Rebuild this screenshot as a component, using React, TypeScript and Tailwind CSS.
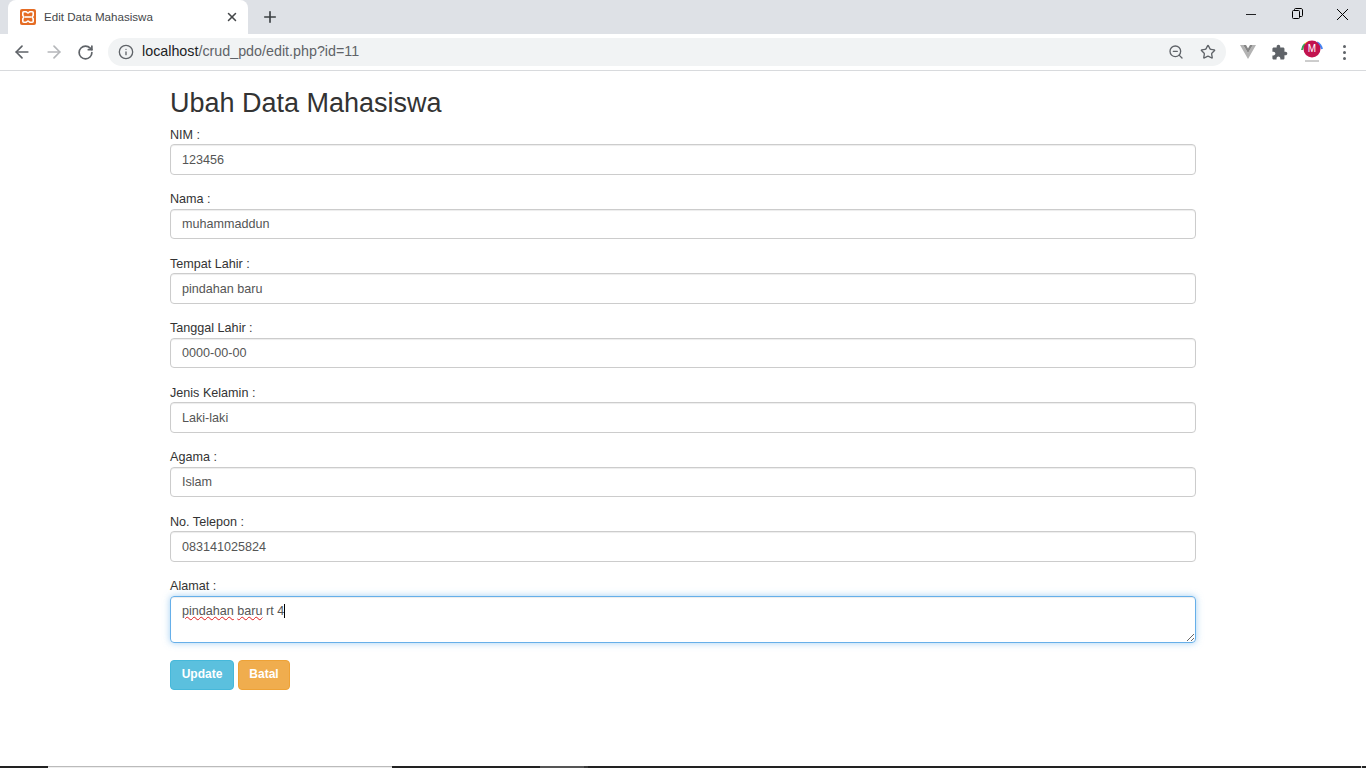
import React from 'react';
import { ArrowLeft, ArrowRight, RotateCw, Info, ZoomOut, Star, Plus, X } from 'lucide-react';

const fields = [
  { label: 'NIM :', value: '123456' },
  { label: 'Nama :', value: 'muhammaddun' },
  { label: 'Tempat Lahir :', value: 'pindahan baru' },
  { label: 'Tanggal Lahir :', value: '0000-00-00' },
  { label: 'Jenis Kelamin :', value: 'Laki-laki' },
  { label: 'Agama :', value: 'Islam' },
  { label: 'No. Telepon :', value: '083141025824' },
];

const Xampp = () => (
  <svg width="16" height="16" viewBox="0 0 16 16">
    <rect width="16" height="16" rx="2" fill="#e56c24" />
    <path d="M3.800 2.800h2.200c1 0 1.200 1.200 2 1.200s1-1.200 2-1.200h2.200c.6 0 1 .4 1 1v2.400c0 1-1.200 1-1.200 1.800s1.200.8 1.200 1.800v2.400c0 .6-.4 1-1 1H10c-1 0-1.200-1.200-2-1.200s-1 1.200-2 1.200H3.800c-.6 0-1-.4-1-1V9.800c0-1 1.200-1 1.200-1.800s-1.200-.8-1.200-1.800V3.800c0-.6.4-1 1-1z" fill="none" stroke="#fff" strokeWidth="1.600" />
    <path d="M5 8h6" stroke="#fff" strokeWidth="1.600" />
  </svg>
);

const Chrome = () => (
  <div className="flex flex-col h-[71px] border-b border-[#d8dadd] bg-white">
    <div className="h-[34px] bg-[#dee1e6] flex items-end relative">
      <div className="ml-2 w-[240px] h-[34px] mt-auto bg-white rounded-t-lg flex items-center pl-3 pr-2 relative">
        <Xampp />
        <span className="ml-2 text-[11.600px] text-[#45474a] flex-1">Edit Data Mahasiswa</span>
        <X size={14} strokeWidth={2.600} className="mr-[1px] text-[#45474a]" />
      </div>
      <Plus size={18} strokeWidth={2.200} className="ml-[13px] mb-[8px] text-[#3c4043]" />
      <div className="ml-auto flex items-center h-[28px] mb-[6px] pr-[2px] text-[#202124]">
        <div className="w-[46px] flex justify-center">
          <svg width="10" height="10" viewBox="0 0 10 10" stroke="currentColor" strokeWidth="1"><path d="M0 5.500h10" /></svg>
        </div>
        <div className="w-[46px] flex justify-center">
          <svg width="12" height="12" viewBox="0 0 12 12" fill="none" stroke="#000" strokeWidth="1"><rect x="1.500" y="2.500" width="7" height="8" rx="1" /><path d="M3.500 2.500V1.500c0-.5.3-1 1-1h5.500c.8 0 1.500.6 1.500 1.500v5.500c0 .7-.5 1-1 1H8.500" /></svg>
        </div>
        <div className="w-[44px] flex justify-center">
          <svg width="11" height="11" viewBox="0 0 11 11" stroke="#000" strokeWidth="1"><path d="M0 0l11 11M11 0L0 11" /></svg>
        </div>
      </div>
    </div>
    <div className="h-[36px] flex items-center">
      <ArrowLeft size={20} strokeWidth={2} className="ml-[12px] text-[#5f6368]" />
      <ArrowRight size={20} strokeWidth={2} className="ml-[12px] text-[#b5b7ba]" />
      <RotateCw size={17} strokeWidth={2.400} className="ml-[13px] text-[#5f6368]" />
      <div className="ml-[14px] w-[1118px] h-[28px] rounded-full bg-[#f1f3f4] flex items-center pl-[10px] pr-[10px]">
        <Info size={16} strokeWidth={2} className="text-[#5f6368]" />
        <span className="ml-[8px] text-[14.300px] text-[#5f6368] flex-1"><span className="text-[#202124]">localhost</span>/crud_pdo/edit.php?id=11</span>
        <ZoomOut size={16} strokeWidth={2} className="text-[#5f6368]" />
        <Star size={16} strokeWidth={2} className="ml-[16px] text-[#5f6368]" />
      </div>
      <svg width="16" height="16" viewBox="0 0 16 16" className="ml-[14px]">
        <path d="M0 1l8 14 8-14h-3.200L8 9 3.200 1z" fill="#b3b3b3" />
        <path d="M3.200 1L8 9l4.800-8H10L8 4.500 6 1z" fill="#868686" />
      </svg>
      <svg width="17" height="17" viewBox="0 0 24 24" fill="#5f6368" className="ml-[15px]">
        <path d="M20.500 11H19V7c0-1.100-.9-2-2-2h-4V3.500C13 2.120 11.880 1 10.500 1S8 2.120 8 3.500V5H4c-1.100 0-1.990.9-1.990 2v3.800H3.500c1.490 0 2.700 1.210 2.700 2.700s-1.210 2.700-2.700 2.700H2V20c0 1.100.9 2 2 2h3.800v-1.500c0-1.490 1.210-2.700 2.700-2.700 1.490 0 2.700 1.210 2.700 2.700V22H17c1.100 0 2-.9 2-2v-4h1.500c1.380 0 2.500-1.120 2.500-2.500S21.880 11 20.500 11z" />
      </svg>
      <div className="ml-[12px] w-[24px] h-[26px] relative">
        <svg width="24" height="26" viewBox="0 0 24 26" className="absolute inset-0" fill="none">
          <path d="M2 11a10 10 0 0 1 3-6" stroke="#34a853" strokeWidth="2" />
          <path d="M5 5a10 10 0 0 1 5-2.500" stroke="#fbbc05" strokeWidth="1.500" />
          <path d="M17 3.500a10 10 0 0 1 5 6.500" stroke="#4285f4" strokeWidth="2" />
          <circle cx="12" cy="10" r="8.500" fill="#c2134f" />
          <path d="M5 22h14" stroke="#9a9a9a" strokeWidth="1" />
        </svg>
        <span className="absolute left-0 right-0 top-[5px] text-center text-white text-[10px] leading-[10px]">M</span>
      </div>
      <div className="ml-[19px] flex flex-col gap-[3px]">
        <span className="w-[3px] h-[3px] rounded-full bg-[#5f6368]" />
        <span className="w-[3px] h-[3px] rounded-full bg-[#5f6368]" />
        <span className="w-[3px] h-[3px] rounded-full bg-[#5f6368]" />
      </div>
    </div>
  </div>
);

export default function App() {
  return (
    <div className="h-[768px] overflow-hidden bg-white flex flex-col font-['Liberation_Sans',Arial,sans-serif]">
      <Chrome />
      <div className="flex-1 w-[1026px] mx-auto text-[12.600px] text-[#333]">
        <h2 className="text-[27px] leading-[30px] mt-[17px] mb-[6px]">Ubah Data Mahasiswa</h2>
        {fields.map((f) => (
          <div key={f.label} className="mb-[13.500px]">
            <label className="block h-[20.400px] leading-[23.500px]">{f.label}</label>
            <input
              readOnly
              defaultValue={f.value}
              className="block w-full h-[30.600px] px-[11px] pb-[0.200px] border border-[#ccc] rounded-[4px] text-[#555] outline-none shadow-[inset_0_1px_1px_rgba(0,0,0,0.075)]"
            />
          </div>
        ))}
        <div className="mb-[13.500px]">
          <label className="block h-[20.400px] leading-[23.500px]">Alamat :</label>
          <div className="w-full h-[47px] px-[11px] pt-[5px] border border-[#66afe9] rounded-[4px] text-[#555] overflow-auto resize-y shadow-[inset_0_1px_1px_rgba(0,0,0,0.075),0_0_7px_rgba(102,175,233,0.6)]">
            <span className="underline decoration-wavy decoration-[#e01b1b] decoration-1">pindahan</span>{' '}
            <span className="underline decoration-wavy decoration-[#e01b1b] decoration-1">baru</span> rt 4
            <span className="inline-block w-px h-[14px] bg-black align-text-bottom" />
          </div>
        </div>
        <div className="flex gap-[4px] pt-[4px]">
          <button className="h-[30px] w-[64px] pb-[2px] bg-[#5bc0de] border border-[#46b8da] rounded-[4px] text-white text-[12px] font-bold">Update</button>
          <button className="h-[30px] w-[52px] pb-[2px] bg-[#f0ad4e] border border-[#eea236] rounded-[4px] text-white text-[12px] font-bold">Batal</button>
        </div>
      </div>
      <div className="h-[2px] flex shrink-0 bg-[#222]">
        <div className="w-[48px]" />
        <div className="w-[344px] bg-[#eee] border-t border-[#bbb]" />
        <div className="w-[148px]" />
        <div className="w-[44px] bg-[#555]" />
        <div className="w-[4px] bg-[#3a3a3a]" />
        <div className="ml-auto mr-[4px] w-[1px] bg-[#ccc]" />
      </div>
    </div>
  );
}
